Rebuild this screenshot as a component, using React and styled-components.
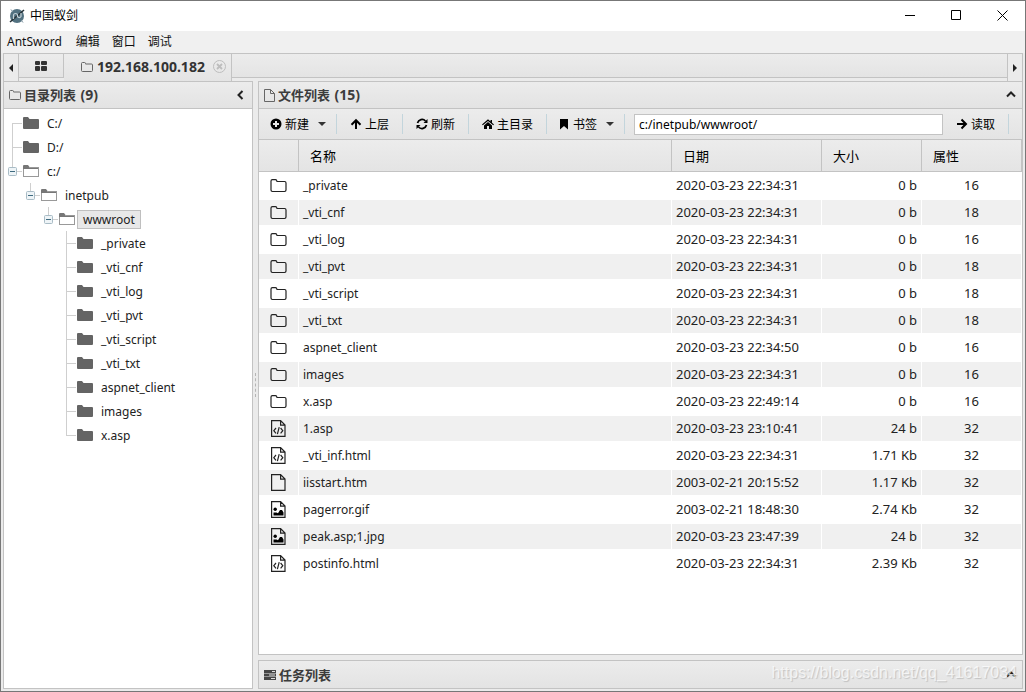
import React, { useState } from "react"
import styled, { createGlobalStyle, ThemeProvider } from "styled-components"

const theme = {
  border: "#c3c3c3",
  backgrounds: ["#ffffff", "#f0f0f0", "#ebebeb", "#e3e3e3"],
  text: "#333333",
  fonts: '"Noto Sans", "Noto Sans CJK SC", sans-serif'
}

const GlobalStyle = createGlobalStyle`
  * {
    box-sizing: border-box;
  }
  body {
    margin: 0;
    overflow: hidden;
  }
  button, input {
    font: inherit;
    color: inherit;
  }
  button {
    border: 0;
    padding: 0;
    background: none;
  }
  svg {
    display: block;
    flex: none;
  }
`

const Window = styled.div`
  display: flex;
  flex-direction: column;
  height: 100vh;
  border: 1px solid #777;
  background: ${props => props.theme.backgrounds[2]};
  color: ${props => props.theme.text};
  font-family: ${props => props.theme.fonts};
  font-size: 12px;
`

const TitleBar = styled.header`
  display: flex;
  align-items: center;
  flex: none;
  height: 30px;
  padding-left: 8px;
  background: #fff;
  color: #000;
`

const AppName = styled.h1`
  flex: 1;
  margin: 0 0 0 5px;
  font-size: 12px;
  line-height: 18px;
  font-weight: 400;
`

const WindowButton = styled.button`
  display: flex;
  align-items: center;
  justify-content: center;
  width: 46px;
  height: 28px;
  margin-bottom: 2px;
`

const MenuBar = styled.nav`
  display: flex;
  align-items: center;
  flex: none;
  gap: 12px;
  height: 22px;
  padding-left: 6px;
  background: ${props => props.theme.backgrounds[1]};
  color: #111;
`

const MenuButton = styled.button`
  min-width: 24px;
  line-height: 18px;
  &:first-child {
    margin-right: 2px;
  }
`

const Body = styled.div`
  display: flex;
  flex-direction: column;
  flex: 1;
  min-height: 0;
  padding: 0 2px 2px;
`

const TabBar = styled.div`
  display: flex;
  flex: none;
  height: 28px;
  border: solid ${props => props.theme.border};
  border-width: 1px 1px 0;
  background: ${props => props.theme.backgrounds[2]};
`

const ScrollButton = styled.button`
  display: flex;
  align-items: center;
  justify-content: center;
  width: 15px;
  border: solid ${props => props.theme.border};
  border-width: ${props => (props.$side === "left" ? "0 1px 0 0" : "0 0 0 1px")};
`

const Tab = styled.button`
  display: flex;
  align-items: center;
  justify-content: center;
  height: ${props => (props.$active ? "27px" : "24px")};
  padding: ${props => (props.$active ? "0 5px 2px 17px" : "0 16px")};
  gap: 4px;
  border: solid ${props => props.theme.border};
  border-width: ${props => (props.$active ? "0 1px 0 0" : "0 1px 1px 0")};
  background: linear-gradient(#ececec, #e4e4e4);
  font-size: 14px;
  font-weight: 700;
`

const CloseIcon = styled.span`
  display: flex;
  margin-left: 4px;
`

const TabFiller = styled.div`
  flex: 1;
  height: 24px;
  border-bottom: 1px solid ${props => props.theme.border};
  background: linear-gradient(#ececec, #e4e4e4);
`

const Layout = styled.main`
  display: flex;
  flex: 1;
  min-height: 0;
`

const Panel = styled.section`
  display: flex;
  flex-direction: column;
  flex: ${props => (props.$grow ? "1" : "none")};
  width: ${props => (props.$width ? props.$width : "auto")};
  min-width: 0;
  min-height: 0;
  border: 1px solid ${props => props.theme.border};
  background: #fff;
`

const PanelHeader = styled.div`
  display: flex;
  align-items: center;
  flex: none;
  gap: 3px;
  height: 27px;
  padding: 0 6px 0 5px;
  border-bottom: ${props => (props.$last ? "0" : "1px solid " + props.theme.border)};
  background: linear-gradient(#ececec, #e3e3e3);
`

const PanelTitle = styled.h2`
  flex: 1;
  margin: 0;
  color: #3c3c3c;
  font-size: 13px;
  line-height: 20px;
  font-weight: 700;
`

const Count = styled.span`
  margin-left: 1px;
  font-size: 14px;
`

const Splitter = styled.div`
  display: flex;
  align-items: center;
  justify-content: center;
  width: 5px;
`

const Grip = styled.div`
  width: 1px;
  height: 24px;
  border-left: 1px dashed #b5b5b5;
`

const RightColumn = styled.div`
  display: flex;
  flex-direction: column;
  flex: 1;
  gap: 5px;
  min-width: 0;
`

const Tree = styled.ul`
  margin: 0;
  padding: ${props => (props.$root ? "2px 0 0" : "0 0 0 18px")};
  list-style: none;
  color: #222;
`

const TreeRow = styled.div`
  display: flex;
  align-items: center;
  height: 24px;
`

const TreeLabel = styled.button`
  height: 19px;
  margin-left: 2px;
  padding: 0 5px;
  border: 1px solid ${props => (props.$selected ? "#bfbfbf" : "transparent")};
  background: ${props => (props.$selected ? "#e8e8e8" : "transparent")};
  line-height: 17px;
`

const Toolbar = styled.div`
  display: flex;
  align-items: center;
  flex: none;
  height: 31px;
  padding-right: 13px;
  border-bottom: 1px solid ${props => props.theme.border};
  background: linear-gradient(#ececec, #e4e4e4);
  color: #000;
`

const ToolButton = styled.button`
  display: flex;
  align-items: center;
  gap: 3px;
  height: 24px;
  padding: ${props => (props.$menu ? "0 10px 0 11px" : "0 13px")};
`

const Caret = styled.span`
  width: 8px;
  margin-left: 6px;
  border: solid transparent;
  border-width: 4px 4px 0;
  border-top-color: #333;
`

const Separator = styled.span`
  width: 1px;
  height: 20px;
  background: #c3d5dc;
`

const PathInput = styled.input`
  flex: 1;
  min-width: 0;
  height: 21px;
  margin-left: 9px;
  padding: 0 4px;
  border: 1px solid ${props => props.theme.border};
  background: #fff;
  outline: none;
`

const Files = styled.div`
  flex: 1;
  min-height: 0;
  overflow: hidden;
`

const Table = styled.table`
  width: 100%;
  table-layout: fixed;
  border-collapse: separate;
  border-spacing: 0;
`

const HeadCell = styled.th`
  width: ${props => (props.$width ? props.$width : "auto")};
  height: 32px;
  padding: 0 11px;
  border-right: 1px solid ${props => props.theme.border};
  border-bottom: 1px solid ${props => props.theme.border};
  background: linear-gradient(#ececec, #e4e4e4);
  color: #000;
  font-size: 13px;
  font-weight: 400;
  text-align: left;
`

const Row = styled.tr`
  background: #fff;
  &:nth-child(even) {
    background: #f0f0f0;
  }
`

const Cell = styled.td`
  height: 27px;
  padding: 0 4px;
  border: solid #fff;
  border-width: 1px 1px 1px 0;
  color: #222;
  font-size: 12px;
  line-height: 18px;
  text-align: ${props => props.$align || "left"};
  white-space: nowrap;
`

const IconCell = styled(Cell)`
  padding-left: 11px;
`

const NumberCell = styled(Cell)`
  padding-bottom: 2px;
  font-size: 13px;
`

const Watermark = styled.div`
  position: absolute;
  right: 9px;
  bottom: 9px;
  font-family: "Liberation Sans", sans-serif;
  font-size: 16px;
  line-height: 20px;
  color: rgba(255, 255, 255, 0.7);
  text-shadow: 1px 1px 1px rgba(0, 0, 0, 0.16);
  pointer-events: none;
`

const Logo = () => (
  <svg width="16" height="16" viewBox="0 0 16 16">
    <circle cx="8" cy="8" r="7" fill="#527180" />
    <path d="M1 14 15 2" stroke="#263238" strokeWidth="1.6" />
    <path d="M4.5 11V7.5a2 2 0 0 1 4 0v1a2 2 0 0 0 3.5 0V5" fill="none" stroke="#c4d1d6" strokeWidth="1.2" />
    <path d="M2 1.5 4 4M12 12l2 2.5" stroke="#78909c" />
  </svg>
)

const Grid = () => (
  <svg width="12" height="10" viewBox="0 0 12 10" fill="#333">
    <rect width="5" height="4" rx="1" />
    <rect x="6" width="6" height="4" rx="1" />
    <rect y="5" width="5" height="5" rx="1" />
    <rect x="6" y="5" width="6" height="5" rx="1" />
  </svg>
)

const SmallFolder = () => (
  <svg width="12" height="10" viewBox="0 0 12 10" fill="none" stroke="#666">
    <path d="M.5 1.5q0-1 1-1h2q1 0 1 1v.5h6q1 0 1 1v5.500q0 1-1 1h-9q-1 0-1-1z" />
  </svg>
)

const SmallFile = () => (
  <svg width="11" height="13" viewBox="0 0 11 13" fill="none" stroke="#666">
    <path d="M.5.5h6l4 4v8H.5zM6.500.5v4h4" />
  </svg>
)

const Tasks = () => (
  <svg width="12" height="10" viewBox="0 0 12 10">
    <path d="M0 0h12v3H0zM0 3.500h12v3H0zM0 7h12v3H0z" fill="#444" />
    <path d="M8 1h3v1H8zM5 4.500h6v1H5zM7 8h4v1H7z" fill="#ddd" />
  </svg>
)

const Close = () => (
  <svg width="13" height="13" viewBox="0 0 13 13" fill="none" stroke="#bdbdbd">
    <circle cx="6.5" cy="6.5" r="6" />
    <path d="m4 4 5 5M9 4 4 9" strokeWidth="1.8" />
  </svg>
)

const chevrons = {
  left: "M6.500 1 2.500 5l4 4",
  up: "M1 6.500l4-4 4 4"
}

const Chevron = ({ to }) => (
  <svg width="10" height="10" viewBox="0 0 10 10" fill="none" stroke="#222" strokeWidth="2">
    <path d={chevrons[to]} />
  </svg>
)

const Triangle = ({ to }) => (
  <svg width="4" height="8" viewBox="0 0 4 8" fill="#222">
    <path d={to === "left" ? "M4 0v8L0 4z" : "M0 0v8l4-4z"} />
  </svg>
)

const TreeFolder = ({ open }) => (
  <svg width="16" height="14" viewBox="0 0 16 14">
    <path d="M0 2q0-1 1-1h4l1.500 2H15q1 0 1 1v8q0 1-1 1H1q-1 0-1-1z" fill={open ? "#777" : "#646464"} />
    {open && <path d="M1 5h14v7H1z" fill="#fff" />}
    {open && <path d="M6 3.500h9.500v9H.5V5" fill="none" stroke="#999" />}
  </svg>
)

// One 24px step of the hierarchy lines, with the expander box when the node is open
const Connector = ({ up, down, box }) => (
  <svg width="19" height="24" viewBox="0 0 19 24">
    <path
      d={"M8.500 " + (up ? 0 : 12) + "V" + (down ? 24 : 12) + "M8 12.500h10"}
      fill="none"
      stroke="#cfcfcf"
    />
    {box && <rect x="4.500" y="8.500" width="8" height="8" rx="1" fill="#eef4f7" stroke="#a9bcc6" />}
    {box && <path d="M6 12.500h5" stroke="#3f6b80" />}
  </svg>
)

const toolPaths = {
  add: <path fillRule="evenodd" d="M6 .5a5.500 5.500 0 1 0 0 11 5.500 5.500 0 0 0 0-11zM5 3h2v2h2v2H7v2H5V7H3V5h2z" />,
  up: <path d="M6 .8 11.200 6 9.800 7.400 7 4.700V11H5V4.700L2.200 7.400.8 6z" />,
  refresh: (
    <g>
      <path d="M1.500 5A4.700 4.700 0 0 1 9.500 3M10.500 7a4.700 4.700 0 0 1-8 2" fill="none" stroke="#000" strokeWidth="1.700" />
      <path d="M11.500 1v4h-4zM.5 11V7h4z" />
    </g>
  ),
  home: <path d="M6 1.200 8.500 3.400V2H10v2.700l2 1.700-.8.900L6 3 .8 7.300 0 6.400zM6 4l4 3.400V11H7V8H5v3H2V7.400z" />,
  bookmark: <path d="M2 1h8v10.500L6 8l-4 3.500z" />,
  right: <path d="M11.400 6 6.200.8 4.800 2.200 7.400 5H1v2h6.400L4.800 9.800l1.400 1.400z" />
}

const ToolIcon = ({ name }) => (
  <svg width="12" height="12" viewBox="0 0 12 12">{toolPaths[name]}</svg>
)

const FileIcon = ({ type }) => {
  if (type === "folder") {
    return (
      <svg width="17" height="16" viewBox="0 0 17 16" fill="none" stroke="#222" strokeWidth="1.200">
        <path d="M1 3q0-1.400 1.400-1.400h3q1 0 1.300 1l.3.900h7.600q1.400 0 1.400 1.400v7.200q0 1.400-1.400 1.400H2.400Q1 13.500 1 12.100z" />
      </svg>
    )
  }
  return (
    <svg width="17" height="17" viewBox="0 0 17 17" fill="none" stroke="#222" strokeWidth="1.200">
      <path d="M1.600.7h9l4.400 4.400v11.200H1.600zM10.600.7v4.400H15" />
      {type === "code" && <path d="M6 8 3.800 10.700 6 13.400M10.600 8l2.200 2.700-2.200 2.700M9.200 7.200l-1.800 7" />}
      {type === "image" && (
        <g fill="#000" stroke="none">
          <circle cx="5.2" cy="8.200" r="1.700" />
          <path d="M3.500 14.600v-3h3l1.500.6 2-3.300h2l1.500 2.500v3.200z" />
        </g>
      )}
    </svg>
  )
}

const folders = ["_private", "_vti_cnf", "_vti_log", "_vti_pvt", "_vti_script", "_vti_txt", "aspnet_client", "images", "x.asp"]

const tree = [
  { name: "C:/" },
  { name: "D:/" },
  {
    name: "c:/",
    children: [
      {
        name: "inetpub",
        children: [{ name: "wwwroot", children: folders.map(name => ({ name })) }]
      }
    ]
  }
]

const files = [
  ["folder", "_private", "2020-03-23 22:34:31", "0 b", 16],
  ["folder", "_vti_cnf", "2020-03-23 22:34:31", "0 b", 18],
  ["folder", "_vti_log", "2020-03-23 22:34:31", "0 b", 16],
  ["folder", "_vti_pvt", "2020-03-23 22:34:31", "0 b", 18],
  ["folder", "_vti_script", "2020-03-23 22:34:31", "0 b", 18],
  ["folder", "_vti_txt", "2020-03-23 22:34:31", "0 b", 18],
  ["folder", "aspnet_client", "2020-03-23 22:34:50", "0 b", 16],
  ["folder", "images", "2020-03-23 22:34:31", "0 b", 16],
  ["folder", "x.asp", "2020-03-23 22:49:14", "0 b", 16],
  ["code", "1.asp", "2020-03-23 23:10:41", "24 b", 32],
  ["code", "_vti_inf.html", "2020-03-23 22:34:31", "1.71 Kb", 32],
  ["file", "iisstart.htm", "2003-02-21 20:15:52", "1.17 Kb", 32],
  ["image", "pagerror.gif", "2003-02-21 18:48:30", "2.74 Kb", 32],
  ["image", "peak.asp;1.jpg", "2020-03-23 23:47:39", "24 b", 32],
  ["code", "postinfo.html", "2020-03-23 22:34:31", "2.39 Kb", 32]
]

const tools = [
  { icon: "add", label: "新建", menu: true },
  { icon: "up", label: "上层" },
  { icon: "refresh", label: "刷新" },
  { icon: "home", label: "主目录" },
  { icon: "bookmark", label: "书签", menu: true }
]

const Branch = ({ nodes, selected, onSelect, root }) => (
  <Tree $root={root}>
    {nodes.map((node, i) => (
      <li key={node.name}>
        <TreeRow>
          <Connector up={!root || i > 0} down={i < nodes.length - 1} box={!!node.children} />
          <TreeFolder open={!!node.children} />
          <TreeLabel $selected={selected === node.name} onClick={() => onSelect(node.name)}>
            {node.name}
          </TreeLabel>
        </TreeRow>
        {node.children && <Branch nodes={node.children} selected={selected} onSelect={onSelect} />}
      </li>
    ))}
  </Tree>
)

const Tool = ({ icon, label, menu }) => (
  <>
    <ToolButton $menu={menu}>
      <ToolIcon name={icon} />
      {label}
      {menu && <Caret />}
    </ToolButton>
    <Separator />
  </>
)

const FileTable = () => (
  <Table>
    <thead>
      <tr>
        <HeadCell $width="40px" aria-label="icon" />
        <HeadCell>名称</HeadCell>
        <HeadCell $width="150px">日期</HeadCell>
        <HeadCell $width="100px">大小</HeadCell>
        <HeadCell $width="100px">属性</HeadCell>
      </tr>
    </thead>
    <tbody>
      {files.map(([type, name, date, size, attr]) => (
        <Row key={name}>
          <IconCell><FileIcon type={type} /></IconCell>
          <Cell>{name}</Cell>
          <NumberCell>{date}</NumberCell>
          <NumberCell $align="right">{size}</NumberCell>
          <NumberCell $align="center">{attr}</NumberCell>
        </Row>
      ))}
    </tbody>
  </Table>
)

const App = () => {
  const [selected, setSelected] = useState("wwwroot")
  const [path, setPath] = useState("c:/inetpub/wwwroot/")

  return (
    <ThemeProvider theme={theme}>
      <GlobalStyle />
      <Window>
        <TitleBar>
          <Logo />
          <AppName>中国蚁剑</AppName>
          <WindowButton aria-label="minimize">
            <svg width="11" height="11"><path d="M0 5.500h10" stroke="#000" /></svg>
          </WindowButton>
          <WindowButton aria-label="maximize">
            <svg width="11" height="11"><path d="M.5.5h9v9h-9z" fill="none" stroke="#000" /></svg>
          </WindowButton>
          <WindowButton aria-label="close">
            <svg width="11" height="11"><path d="m.5.5 10 10m0-10-10 10" stroke="#000" /></svg>
          </WindowButton>
        </TitleBar>
        <MenuBar>
          {["AntSword", "编辑", "窗口", "调试"].map(item => <MenuButton key={item}>{item}</MenuButton>)}
        </MenuBar>
        <Body>
          <TabBar>
            <ScrollButton $side="left" aria-label="scroll left"><Triangle to="left" /></ScrollButton>
            <Tab aria-label="home"><Grid /></Tab>
            <Tab $active>
              <SmallFolder />
              192.168.100.182
              <CloseIcon><Close /></CloseIcon>
            </Tab>
            <TabFiller />
            <ScrollButton $side="right" aria-label="scroll right"><Triangle to="right" /></ScrollButton>
          </TabBar>
          <Layout>
            <Panel $width="250px">
              <PanelHeader>
                <SmallFolder />
                <PanelTitle>目录列表 <Count>(9)</Count></PanelTitle>
                <button aria-label="collapse"><Chevron to="left" /></button>
              </PanelHeader>
              <Branch nodes={tree} selected={selected} onSelect={setSelected} root />
            </Panel>
            <Splitter><Grip /></Splitter>
            <RightColumn>
              <Panel $grow>
                <PanelHeader>
                  <SmallFile />
                  <PanelTitle>文件列表 <Count>(15)</Count></PanelTitle>
                  <button aria-label="collapse"><Chevron to="up" /></button>
                </PanelHeader>
                <Toolbar>
                  {tools.map(tool => <Tool key={tool.icon} {...tool} />)}
                  <PathInput aria-label="path" value={path} onChange={e => setPath(e.target.value)} />
                  <Tool icon="right" label="读取" />
                </Toolbar>
                <Files><FileTable /></Files>
              </Panel>
              <Panel>
                <PanelHeader $last>
                  <Tasks />
                  <PanelTitle>任务列表</PanelTitle>
                  <button aria-label="expand"><Chevron to="up" /></button>
                </PanelHeader>
              </Panel>
            </RightColumn>
          </Layout>
        </Body>
        <Watermark>https://blog.csdn.net/qq_41617034</Watermark>
      </Window>
    </ThemeProvider>
  )
}

export default App
